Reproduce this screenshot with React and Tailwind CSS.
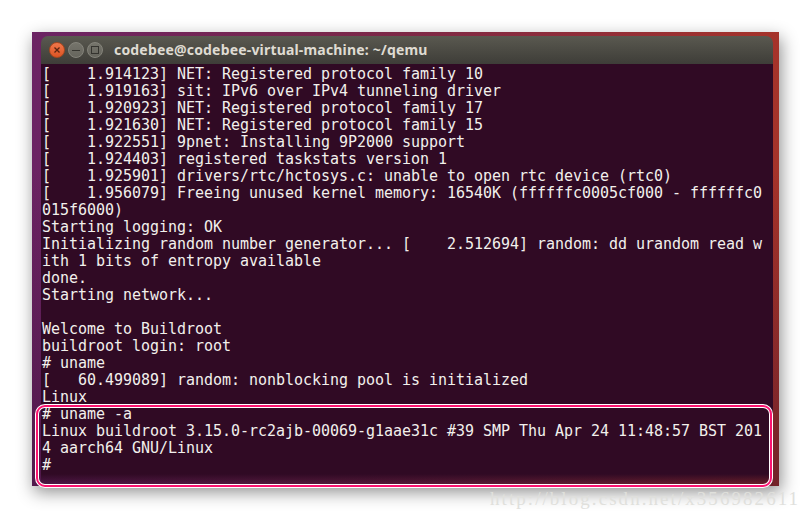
const LINES = [
  "[    1.914123] NET: Registered protocol family 10",
  "[    1.919163] sit: IPv6 over IPv4 tunneling driver",
  "[    1.920923] NET: Registered protocol family 17",
  "[    1.921630] NET: Registered protocol family 15",
  "[    1.922551] 9pnet: Installing 9P2000 support",
  "[    1.924403] registered taskstats version 1",
  "[    1.925901] drivers/rtc/hctosys.c: unable to open rtc device (rtc0)",
  "[    1.956079] Freeing unused kernel memory: 16540K (ffffffc0005cf000 - ffffffc0",
  "015f6000)",
  "Starting logging: OK",
  "Initializing random number generator... [    2.512694] random: dd urandom read w",
  "ith 1 bits of entropy available",
  "done.",
  "Starting network...",
  "",
  "Welcome to Buildroot",
  "buildroot login: root",
  "# uname",
  "[   60.499089] random: nonblocking pool is initialized",
  "Linux",
  "# uname -a",
  "Linux buildroot 3.15.0-rc2ajb-00069-g1aae31c #39 SMP Thu Apr 24 11:48:57 BST 201",
  "4 aarch64 GNU/Linux",
  "#",
];

function WindowButtons() {
  return (
    <div className="flex items-center gap-[3px]">
      <span className="flex h-[16px] w-[16px] items-center justify-center rounded-full border border-[#a8471f] bg-gradient-to-b from-[#f0774a] to-[#dc5423]">
        <svg width="8" height="8" viewBox="0 0 8 8">
          <path d="M1.5 1.5l5 5M6.5 1.5l-5 5" stroke="#5a2410" strokeWidth="1.3" />
        </svg>
      </span>
      <span className="flex h-[16px] w-[16px] items-center justify-center rounded-full border border-[#85847b] bg-gradient-to-b from-[#75746b] to-[#66655d]">
        <span className="h-[1px] w-[8px] bg-[#35342f]" />
      </span>
      <span className="flex h-[16px] w-[16px] items-center justify-center rounded-full border border-[#85847b] bg-gradient-to-b from-[#75746b] to-[#66655d]">
        <span className="h-[8px] w-[8px] border border-[#35342f]" />
      </span>
    </div>
  );
}

export default function App() {
  return (
    <div className="relative h-[518px] w-[811px] overflow-hidden bg-white pl-[32px] pt-[32px]">
      <div className="h-[454px] w-[747px] bg-[linear-gradient(to_bottom,rgba(40,10,40,0)_30%,rgba(40,10,40,0.4)),linear-gradient(to_right,#6b2363,#7d2846_50%,#a5332a)] pl-[9px] pr-[6px] pt-[4px] shadow-[2px_6px_16px_rgba(0,0,0,0.45)]">
        <div className="flex h-[28px] items-center gap-[11px] rounded-t-[7px] bg-gradient-to-b from-[#5a5950] to-[#3e3d38] pl-[8px]">
          <WindowButtons />
          <span className="font-['Noto_Sans',sans-serif] text-[14px] font-bold leading-none tracking-[0.18px] text-[#dfdbd2]">
            codebee@codebee-virtual-machine: ~/qemu
          </span>
        </div>
        <div className="h-[410px] bg-[#300a24] pl-px pt-[2px] font-['DejaVu_Sans_Mono',monospace] text-[15px] leading-[17px] tracking-[-0.03px] text-[#f2f0ec]">
          {LINES.map((line, i) => (
            <div key={i} className="h-[17px] whitespace-pre">
              {line}
            </div>
          ))}
        </div>
        <div className="h-[12px] bg-gradient-to-b from-[#300a24] to-transparent" />
      </div>

      {/* marker drawn over the last command */}
      <div className="absolute left-[35px] top-[404px] h-[84px] w-[738px] rounded-[10px] border-[4px] border-white">
        <div className="absolute inset-[-3px] rounded-[9px] border-[2px] border-[#fa1470]" />
      </div>

      <div className="absolute left-[490px] top-[485px] whitespace-nowrap font-['Liberation_Serif',serif] text-[19px] tracking-[2.06px] text-[#e0e0dc]">
        http://blog.csdn.net/x356982611
      </div>
    </div>
  );
}
